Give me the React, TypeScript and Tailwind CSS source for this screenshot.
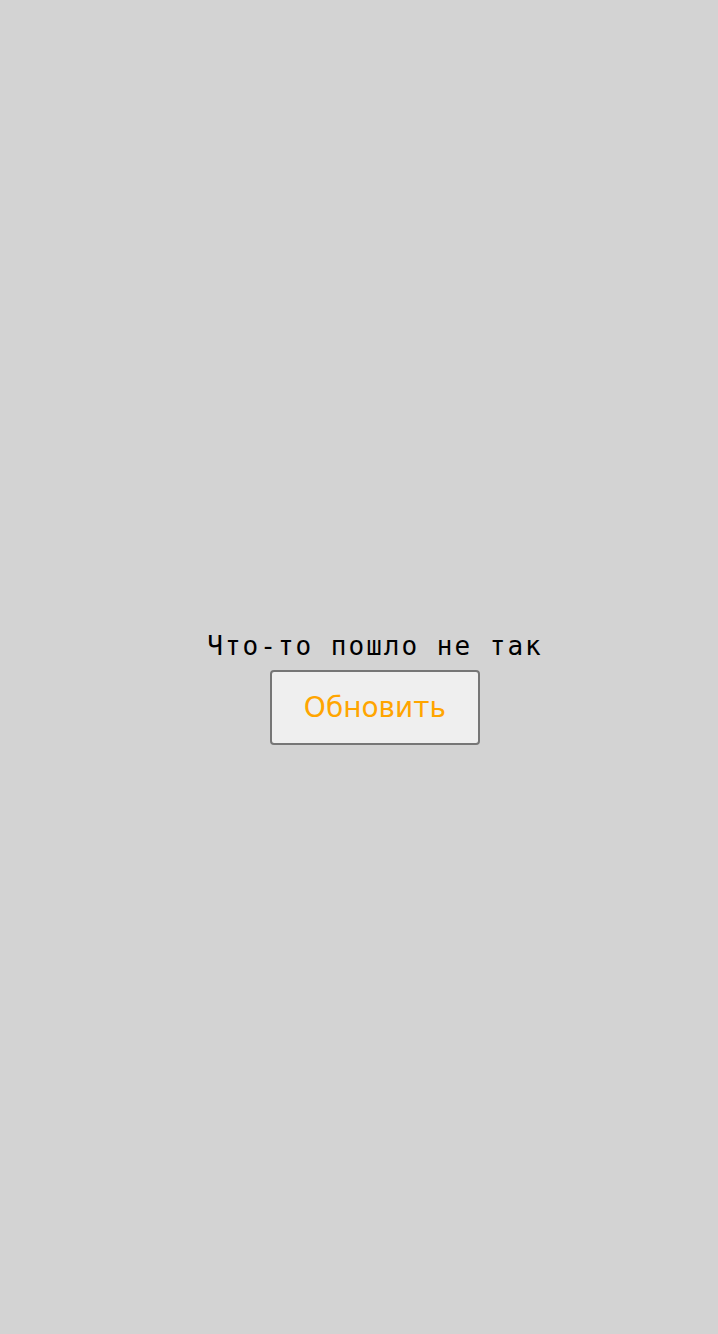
export default function App() {
  return (
    <div className="min-h-screen w-full bg-[#d3d3d3] flex flex-col items-center justify-center">
      <div className="flex flex-col items-center pt-[42px] ml-[32px]">
        <p className="text-black text-[26px] leading-[29px] tracking-[2px] font-['DejaVu_Sans_Mono',monospace]">
          Что-то пошло не так
        </p>
        <button className="mt-[9px] w-[210px] h-[75px] pt-[2px] bg-[#efefef] border-2 border-[#767676] rounded-[4px] text-[#ffa500] text-[28px] font-['DejaVu_Sans',sans-serif]">
          Обновить
        </button>
      </div>
    </div>
  );
}
